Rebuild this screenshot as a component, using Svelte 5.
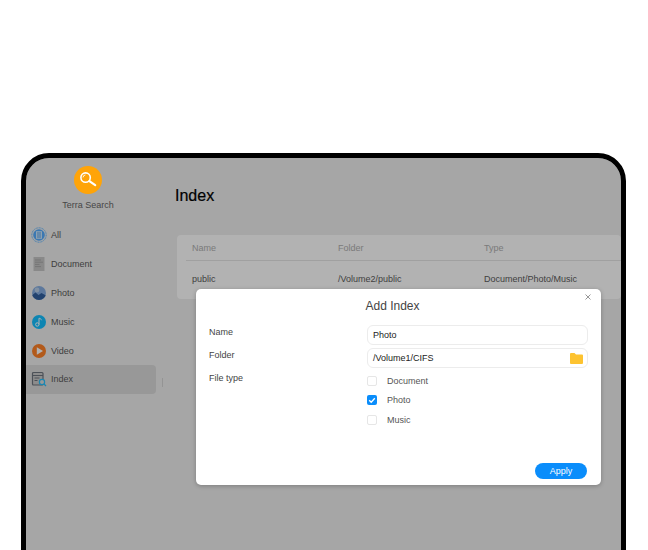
<script lang="ts">
  const navItems = [
    { id: 'all', label: 'All' },
    { id: 'document', label: 'Document' },
    { id: 'photo', label: 'Photo' },
    { id: 'music', label: 'Music' },
    { id: 'video', label: 'Video' },
    { id: 'index', label: 'Index' }
  ];
  const fileTypes = [
    { label: 'Document', checked: false },
    { label: 'Photo', checked: true },
    { label: 'Music', checked: false }
  ];
</script>

<div class="page">
  <div class="device">
    <aside class="sidebar">
      <div class="brand">
        <span class="logo">
          <svg viewBox="0 0 28 28" width="28" height="28">
            <circle cx="14" cy="14" r="14" fill="#ffa408" />
            <circle cx="11.600" cy="11.600" r="4.700" fill="none" stroke="#fff" stroke-width="1.600" />
            <path d="M15.400 15.200l5.800 4" stroke="#fff" stroke-width="2.200" stroke-linecap="round" />
            <path d="M9 11.400a2.800 2.800 0 0 1 2.400-2.500" fill="none" stroke="#fff" stroke-width="0.900" />
          </svg>
        </span>
        <span class="brand-name">Terra Search</span>
      </div>
      <nav>
        {#each navItems as item (item.id)}
          <div class="nav-item" class:active={item.id === 'index'}>
            <svg class="nav-icon" viewBox="0 0 16 16" width="16" height="16">
              {#if item.id === 'all'}
                <circle cx="8" cy="8" r="7.200" fill="none" stroke="#5ab2ff" stroke-width="1" stroke-dasharray="1 0.600" />
                <circle cx="8" cy="8" r="5.800" fill="#55acff" />
                <rect x="5" y="4.200" width="6" height="7.600" fill="#cae8ff" />
                <path d="M6 6h4M6 8h4M6 10h4" stroke="#3f90e3" stroke-width="0.800" />
              {:else if item.id === 'document'}
                <rect x="2.500" y="1" width="11" height="14" fill="#c5c5c5" />
                <path d="M4 4h6M4 6.200h8M4 8.400h4.500M4 10.600h6" stroke="#a8a8a8" stroke-width="1" />
              {:else if item.id === 'photo'}
                <clipPath id="photo-clip"><circle cx="8" cy="8" r="7" /></clipPath>
                <circle cx="8" cy="8" r="7" fill="#86ade0" />
                <circle cx="6" cy="5" r="2.400" fill="#b8cfe8" />
                <path d="M0 11l4.500-3.500 3 2.500 3-2 5.500 3V16H0z" fill="#305f9f" clip-path="url(#photo-clip)" />
              {:else if item.id === 'music'}
                <circle cx="8" cy="8" r="7" fill="#13bfff" />
                <circle cx="6.300" cy="10.500" r="1.700" fill="none" stroke="#fff" stroke-width="1" />
                <path d="M8 10.500V4.200c1 .2 2.200 .8 2.600 2" fill="none" stroke="#fff" stroke-width="1" />
              {:else if item.id === 'video'}
                <circle cx="8" cy="8" r="7" fill="#ff8128" />
                <path d="M5.800 4.300v7.400L12 8z" fill="#fff" />
              {:else}
                <rect x="1.500" y="1.500" width="10.500" height="12.500" rx="1" fill="#c9c9c9" stroke="#6e757e" stroke-width="1.200" />
                <path d="M1.500 4.500h10.500M3.500 7h5M3.500 9.500h3" stroke="#6e757e" stroke-width="1" />
                <circle cx="11" cy="11" r="2.600" fill="#dcdcdc" stroke="#27c1ff" stroke-width="1.200" />
                <path d="M13 13l2 2" stroke="#27c1ff" stroke-width="1.300" />
              {/if}
            </svg>
            <span>{item.label}</span>
          </div>
        {/each}
      </nav>
      <span class="grip"></span>
    </aside>

    <main class="content">
      <h1>Index</h1>
      <section class="table-card">
        <div class="row head">
          <span>Name</span>
          <span>Folder</span>
          <span>Type</span>
        </div>
        <div class="row">
          <span>public</span>
          <span>/Volume2/public</span>
          <span>Document/Photo/Music</span>
        </div>
      </section>
    </main>

    <div class="scrim"></div>

    <div class="dialog">
      <button type="button" class="close" aria-label="Close">
        <svg viewBox="0 0 6 6" width="6" height="6">
          <path d="M.5.5l5 5M5.500.5l-5 5" stroke="#8b8b8b" stroke-width="0.900" />
        </svg>
      </button>
      <h2>Add Index</h2>
      <div class="form">
        <span class="label">Name</span>
        <div class="field">Photo</div>
        <span class="label">Folder</span>
        <div class="field">
          /Volume1/CIFS
          <svg class="folder" viewBox="0 0 13 11" width="13" height="11">
            <path d="M0 1a1 1 0 0 1 1-1h3.500l1.500 1.500h6a1 1 0 0 1 1 1V10a1 1 0 0 1-1 1H1a1 1 0 0 1-1-1z" fill="#fdc330" />
          </svg>
        </div>
        <span class="label">File type</span>
        <div class="checks">
          {#each fileTypes as type (type.label)}
            <div class="check-row">
              <span class="box" class:checked={type.checked}>
                {#if type.checked}
                  <svg viewBox="0 0 10 10" width="10" height="10">
                    <path d="M2.200 5.200l2 2 3.600-4" fill="none" stroke="#fff" stroke-width="1.300" />
                  </svg>
                {/if}
              </span>
              <span>{type.label}</span>
            </div>
          {/each}
        </div>
      </div>
      <div class="actions">
        <button type="button" class="apply">Apply</button>
      </div>
    </div>
  </div>
</div>

<style>
  :global(body) {
    margin: 0;
    background: #fff;
  }

  .page {
    width: 648px;
    height: 550px;
    overflow: hidden;
    padding: 153px 22px 0 21px;
    box-sizing: border-box;
    font-family: 'Liberation Sans', Arial, sans-serif;
  }

  .device {
    position: relative;
    display: flex;
    height: 440px;
    box-sizing: border-box;
    border: 5px solid #000;
    border-radius: 28px;
    background: #eeeeee;
    overflow: hidden;
  }

  .sidebar {
    position: relative;
    flex: 0 0 130px;
    display: flex;
    flex-direction: column;
    padding-top: 8px;
  }

  .brand {
    display: flex;
    flex-direction: column;
    align-items: center;
    margin-bottom: 10px;
    padding-right: 6px;
  }

  .logo {
    position: relative;
    z-index: 2;
    height: 28px;
  }

  .brand-name {
    margin-top: 6px;
    font-size: 9px;
    line-height: 11px;
    color: #666;
  }

  .nav-item {
    display: flex;
    align-items: center;
    gap: 4px;
    height: 28.800px;
    padding-left: 5px;
    font-size: 9px;
    color: #5a5a5a;
    border-radius: 0 4px 4px 0;
  }

  .nav-item.active {
    background: #dadada;
  }

  .grip {
    position: absolute;
    left: 136px;
    top: 220px;
    width: 1px;
    height: 9px;
    background: #d4d4d4;
  }

  .content {
    flex: 1;
    min-width: 0;
    padding: 28px 0 0 19px;
  }

  h1 {
    position: relative;
    z-index: 2;
    margin: 0 0 29px;
    font-size: 16px;
    line-height: 20px;
    font-weight: 400;
    color: #000;
    -webkit-text-stroke: 0.2px #000;
  }

  .table-card {
    margin-left: 2px;
    height: 64px;
    padding: 0 0 0 9px;
    border-radius: 4px;
    background: #fff;
  }

  .row {
    display: grid;
    grid-template-columns: 146px 146px 1fr;
    padding-left: 6px;
    font-size: 9px;
    line-height: 11px;
    color: #5c5c5c;
  }

  .row.head {
    box-sizing: border-box;
    height: 26px;
    padding-top: 2px;
    align-items: center;
    border-bottom: 1px solid #e6e6e6;
    color: #b0b0b0;
    margin-bottom: 13px;
  }

  .scrim {
    position: absolute;
    inset: 0;
    background: rgba(0, 0, 0, 0.3);
    z-index: 1;
  }

  .dialog {
    position: absolute;
    z-index: 3;
    left: 170px;
    top: 131px;
    width: 405px;
    height: 196px;
    box-sizing: border-box;
    display: flex;
    flex-direction: column;
    padding: 10px 14px 6px 13px;
    border-radius: 5px;
    background: #fff;
    box-shadow: 0 1px 4px rgba(0, 0, 0, 0.25);
  }

  .close {
    position: absolute;
    top: 5px;
    right: 10px;
    display: flex;
    padding: 0;
    border: 0;
    background: none;
  }

  h2 {
    margin: 0 0 12px;
    padding-right: 11px;
    text-align: center;
    font-size: 12px;
    line-height: 14px;
    font-weight: 400;
    color: #444;
  }

  .form {
    display: grid;
    grid-template-columns: 158px 1fr;
    grid-auto-rows: 20px;
    row-gap: 3px;
    font-size: 9px;
    align-items: center;
    margin-right: -1px;
  }

  .label {
    align-self: start;
    line-height: 14px;
    color: #444;
  }

  .field {
    position: relative;
    display: flex;
    align-items: center;
    justify-content: space-between;
    height: 20px;
    box-sizing: border-box;
    padding: 0 4px 0 5px;
    border: 1px solid #ececec;
    border-radius: 6px;
    color: #222;
  }

  .checks {
    align-self: start;
    display: flex;
    flex-direction: column;
    gap: 8.700px;
    margin-top: 4px;
  }

  .check-row {
    display: flex;
    align-items: center;
    gap: 10px;
    height: 11px;
    color: #555;
  }

  .box {
    display: flex;
    width: 10px;
    height: 10px;
    box-sizing: border-box;
    border: 1px solid #e6e6e6;
    border-radius: 2px;
  }

  .box.checked {
    border: 0;
    background: #0a8dfb;
  }

  .actions {
    margin-top: auto;
    display: flex;
    justify-content: flex-end;
  }

  .apply {
    width: 52px;
    height: 16px;
    padding: 0;
    border: 0;
    border-radius: 8px;
    background: #0a8dfb;
    color: #fff;
    font: 9px 'Liberation Sans', Arial, sans-serif;
  }
</style>
